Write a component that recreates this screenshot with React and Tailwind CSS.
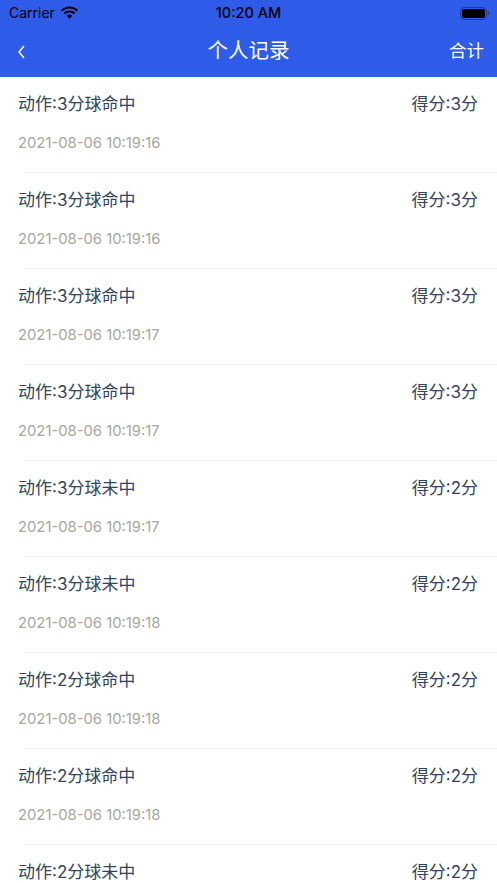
const records = [
  { action: '动作:3分球命中', score: '得分:3分', time: '2021-08-06 10:19:16' },
  { action: '动作:3分球命中', score: '得分:3分', time: '2021-08-06 10:19:16' },
  { action: '动作:3分球命中', score: '得分:3分', time: '2021-08-06 10:19:17' },
  { action: '动作:3分球命中', score: '得分:3分', time: '2021-08-06 10:19:17' },
  { action: '动作:3分球未中', score: '得分:2分', time: '2021-08-06 10:19:17' },
  { action: '动作:3分球未中', score: '得分:2分', time: '2021-08-06 10:19:18' },
  { action: '动作:2分球命中', score: '得分:2分', time: '2021-08-06 10:19:18' },
  { action: '动作:2分球命中', score: '得分:2分', time: '2021-08-06 10:19:18' },
  { action: '动作:2分球未中', score: '得分:2分', time: '2021-08-06 10:19:19' },
]

function Wifi() {
  return (
    <svg width="19" height="14" viewBox="0 0 19 14" fill="#000">
      <path d="M9.5 2.6c2.7 0 5.2 1 7.1 2.8l1.4-1.5C15.7 1.7 12.7.4 9.5.4S3.3 1.700 1 3.900l1.400 1.500C4.300 3.600 6.800 2.600 9.500 2.600z" />
      <path d="M9.500 6.600c1.600 0 3.100.6 4.300 1.700l1.400-1.500C13.700 5.300 11.700 4.500 9.500 4.500s-4.200.8-5.700 2.300l1.400 1.500c1.200-1.100 2.700-1.700 4.300-1.700z" />
      <path d="M9.500 8.600c-1.100 0-2 .4-2.800 1.100l2.800 3 2.800-3c-.8-.7-1.700-1.100-2.800-1.100z" />
    </svg>
  )
}

function Battery() {
  return (
    <div className="flex items-center gap-px">
      <div className="w-[27px] h-[13px] rounded-[4px] border border-[#1d3a94] p-px">
        <div className="w-full h-full rounded-[2px] bg-black"></div>
      </div>
      <div className="w-px h-1 bg-[#1d3a94]"></div>
    </div>
  )
}

export default function App() {
  return (
    <div
      className="h-[883px] overflow-hidden bg-white"
      style={{ fontFamily: '"Inter", "Noto Sans CJK SC", sans-serif' }}
    >
      {/* header */}
      <div className="bg-[#2e5ce9] h-[77px]">
        <div className="relative flex items-center justify-between h-[26px] pl-[9px] pr-[8px] text-black">
          <div className="flex items-center gap-[5px]">
            <span className="text-[14px] leading-none">Carrier</span>
            <Wifi />
          </div>
          <span className="absolute left-0 right-0 text-center text-[14.500px] font-medium leading-none">10:20 AM</span>
          <Battery />
        </div>
        <div className="flex items-center h-[51px] px-[13px] text-white">
          <div className="flex-1">
            <svg className="ml-1" width="9" height="16" viewBox="0 0 9 16" fill="none" stroke="#fff" strokeWidth="1.500">
              <path d="M7 2 L2 8 L7 14" />
            </svg>
          </div>
          <span className="text-[20.500px]">个人记录</span>
          <div className="flex-1 text-right text-[17.500px]">合计</div>
        </div>
      </div>

      {/* list */}
      <div>
        {records.map((r, i) => (
          <div key={i} className="h-[96px] pl-[18px]">
            <div className="flex items-center justify-between h-[54px] pt-px pr-[19px] text-[17px] text-[#32435f]">
              <span>{r.action}</span>
              <span>{r.score}</span>
            </div>
            <p className="text-[14.800px] leading-[24px] text-[#a6a6a6]">{r.time}</p>
            <div className="mt-[17px] ml-[6px] h-px bg-[#f3f3f3]"></div>
          </div>
        ))}
      </div>
    </div>
  )
}
